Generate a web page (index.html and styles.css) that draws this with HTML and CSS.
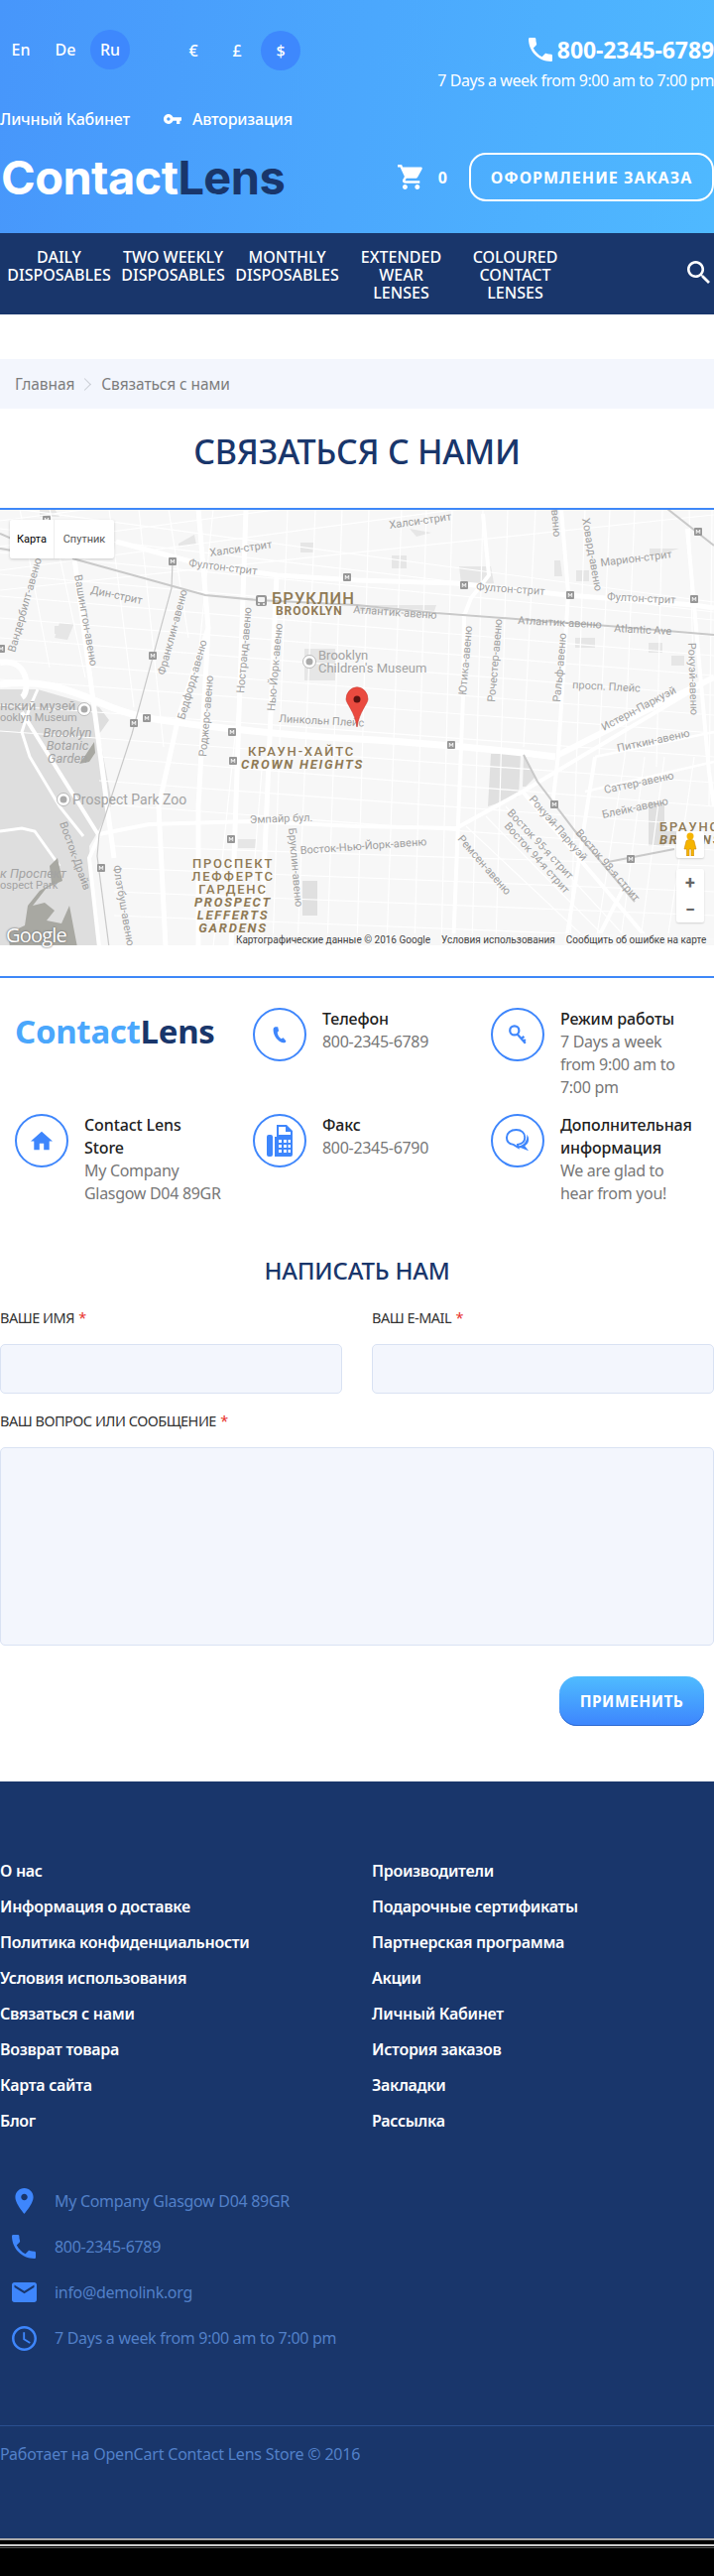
FILE: index.html
```html
<!DOCTYPE html>
<html lang="ru">
<head>
<meta charset="utf-8">
<title>Связаться с нами</title>
<link rel="stylesheet" href="styles.css">
</head>
<body>
<svg class="defs" width="0" height="0" aria-hidden="true">
  <defs>
    <symbol id="i-call" viewBox="3 3 18 18"><path d="M6.62 10.79c1.44 2.83 3.76 5.14 6.59 6.59l2.2-2.2c.27-.27.67-.36 1.02-.24 1.12.37 2.33.57 3.57.57.55 0 1 .45 1 1V20c0 .55-.45 1-1 1-9.39 0-17-7.61-17-17 0-.55.45-1 1-1h3.5c.55 0 1 .45 1 1 0 1.25.2 2.45.57 3.57.11.35.03.74-.25 1.02l-2.2 2.2z"/></symbol>
    <symbol id="i-cart" viewBox="1 2 21 20"><path d="M7 18c-1.1 0-1.99.9-1.99 2S5.9 22 7 22s2-.9 2-2-.9-2-2-2zM1 2v2h2l3.6 7.59-1.35 2.45c-.16.28-.25.61-.25.96 0 1.1.9 2 2 2h12v-2H7.42c-.14 0-.25-.11-.25-.25l.03-.12.9-1.63h7.45c.75 0 1.41-.41 1.75-1.03l3.58-6.49c.08-.14.12-.31.12-.48 0-.55-.45-1-1-1H5.21l-.94-2H1zm16 16c-1.1 0-1.99.9-1.99 2s.89 2 1.99 2 2-.9 2-2-.9-2-2-2z"/></symbol>
    <symbol id="i-search" viewBox="3 3 17.5 17.5"><path d="M15.5 14h-.79l-.28-.27C15.41 12.59 16 11.11 16 9.5 16 5.91 13.09 3 9.5 3S3 5.91 3 9.5 5.91 16 9.5 16c1.61 0 3.09-.59 4.23-1.57l.27.28v.79l5 4.99L20.49 19l-4.99-5zm-6 0C7.01 14 5 11.99 5 9.5S7.01 5 9.5 5 14 7.01 14 9.5 11.99 14 9.5 14z"/></symbol>
    <symbol id="i-key" viewBox="1 6 22 12"><path d="M12.65 10C11.83 7.67 9.61 6 7 6c-3.31 0-6 2.69-6 6s2.69 6 6 6c2.61 0 4.83-1.67 5.65-4H17v4h4v-4h2v-4H12.65zM7 14c-1.1 0-2-.9-2-2s.9-2 2-2 2 .9 2 2-.9 2-2 2z"/></symbol>
    <symbol id="i-place" viewBox="5 2 14 20"><path d="M12 2C8.13 2 5 5.13 5 9c0 5.25 7 13 7 13s7-7.75 7-13c0-3.87-3.13-7-7-7zm0 9.5c-1.38 0-2.5-1.12-2.5-2.5s1.12-2.5 2.5-2.5 2.5 1.12 2.5 2.5-1.12 2.5-2.5 2.5z"/></symbol>
    <symbol id="i-mail" viewBox="2 4 20 16"><path d="M20 4H4c-1.1 0-1.99.9-1.99 2L2 18c0 1.1.9 2 2 2h16c1.1 0 2-.9 2-2V6c0-1.1-.9-2-2-2zm0 4l-8 5-8-5V6l8 5 8-5v2z"/></symbol>
    <symbol id="i-clock" viewBox="2 2 20 20"><path d="M11.99 2C6.47 2 2 6.48 2 12s4.47 10 9.99 10C17.52 22 22 17.52 22 12S17.52 2 11.99 2zM12 20c-4.42 0-8-3.58-8-8s3.58-8 8-8 8 3.58 8 8-3.58 8-8 8zm.5-13H11v6l5.25 3.15.75-1.23-4.5-2.67z"/></symbol>
    <symbol id="m" viewBox="0 0 8 8"><rect width="8" height="8" rx="1" fill="#979797"/><path d="M1.8 6V2h1L4 4l1.2-2h1v4h-.9V3.6L4 5.4 2.7 3.600V6z" fill="#f4f4f4"/></symbol>
  </defs>
</svg>

<header class="head">
  <div class="head-top">
    <div class="pickers">
      <div class="picker">
        <a class="pick">En</a><a class="pick">De</a><a class="pick pick-on">Ru</a>
      </div>
      <div class="picker picker-cur">
        <a class="pick">€</a><a class="pick">£</a><a class="pick pick-on">$</a>
      </div>
    </div>
    <div class="contact">
      <div class="contact-phone"><svg class="ic-phone"><use href="#i-call"/></svg>800-2345-6789</div>
      <div class="contact-hours">7 Days a week from 9:00 am to 7:00 pm</div>
    </div>
  </div>
  <div class="account">
    <a>Личный Кабинет</a>
    <a class="login"><svg class="ic-key"><use href="#i-key"/></svg>Авторизация</a>
  </div>
  <div class="brandrow">
    <a class="logo">Contact<b>Lens</b></a>
    <div class="cartbox">
      <svg class="ic-cart"><use href="#i-cart"/></svg>
      <span class="cart-n">0</span>
      <a class="checkout">ОФОРМЛЕНИЕ ЗАКАЗА</a>
    </div>
  </div>
</header>

<nav class="menu">
  <a>Daily Disposables</a>
  <a>Two Weekly Disposables</a>
  <a>Monthly Disposables</a>
  <a>Extended Wear Lenses</a>
  <a>Coloured Contact Lenses</a>
  <svg class="ic-search"><use href="#i-search"/></svg>
</nav>

<main class="main">
<div class="crumbs"><a>Главная</a><span class="crumb-sep"></span><a>Связаться с нами</a></div>

<h1 class="title">СВЯЗАТЬСЯ С НАМИ</h1>

<section class="mapwrap">
  <svg class="map" viewBox="0 1 720 439" width="720" height="439">
    <rect x="0" y="0" width="720" height="442" fill="#f7f7f7"/>
    <!-- park and water -->
    <path fill="#dedede" d="M0 182H38L100 200 110 213 100 227 113 297 100 323 90 340 93 383 100 442H0Z"/>
    <path fill="none" stroke="#fff" stroke-width="3" d="M38 182 30 200 22 225 30 250 60 300 84 330M0 325 22 322 35 325 60 360"/>
    <path fill="#a8a8a2" d="M50 360 58 352 63 375 47 382 33 400 45 397 55 405 47 415 62 418 70 400 78 442H10L8 428 25 420 28 400 40 385 52 378ZM85 250 95 235 96 246 90 255 80 257Z"/>
    <path fill="#e6e6e6" d="M40 0H55L60 8H40ZM180 35 196 26 198 36 180 38ZM303 34H316V44H303ZM395 47H410V60H395ZM463 58H495L498 75H465ZM413 20 435 24 420 28ZM655 40H685L665 46H655ZM581 62H594V73H581ZM559 52H565L567 68H559ZM580 130H600V140H580ZM654 135H668V145H654ZM677 148H690V158H677ZM360 97H440L438 103H360ZM240 333H258V342H240ZM60 115H75L68 132 55 130ZM55 118H65V126H55ZM307 141H338V173H307Z"/>
    <path fill="#e0e0e0" d="M495 247H525L523 290 492 300ZM528 248 540 270 530 280H527ZM654 295H670V340H654ZM665 325H682V338H665ZM305 375H320V410H305Z"/>
    <!-- minor street grid -->
    <g fill="none" stroke="#fff" stroke-width="1.200">
      <path d="M0 12 720 -82M0 38 720 -58M0 62 720 -34M0 82 720 6M0 -2 720 94M0 20 720 104M0 44 720 112M0 66 720 128M0 88 720 148M0 110 720 168M0 130 720 188M0 152 720 208M0 172 720 226M0 198 720 250M0 224 720 276M100 250 720 300M100 274 720 320M110 298 720 344M115 340 720 360M115 362 720 386M115 386 720 410M115 410 720 434"/>
      <path d="M20 0 50 160M50 0 86 170M110 0 135 200M140 0 165 240M170 0 190 130M215 0 198 170 M240 200 215 442M265 250 250 442M290 0 275 442M318 0 300 442M345 0 330 442M372 0 360 442M405 0 390 442M430 0 418 442M456 0 445 442M487 0 476 442M512 0 500 442M540 0 528 240M590 0 575 442M615 0 604 250M640 0 630 250M668 0 662 260M695 0 700 200M718 0 715 300"/>
      <path d="M630 250 600 442M650 250 625 442M670 250 645 442M700 250 672 442M530 290 660 442M510 300 640 442M490 310 620 442M470 320 600 442"/>
    </g>
    <!-- main roads -->
    <g fill="none" stroke="#fff">
      <path stroke-width="7" d="M0 177C40 172 65 180 100 195S150 212 200 218 320 230 360 232 500 242 560 250"/>
      <path stroke-width="6" d="M563 248 650 204 720 170M0 155C30 150 30 185 22 190"/>
      <path stroke-width="5" d="M117 33 207 57 280 67 360 72 460 75 573 87 700 97 720 100"/>
      <path stroke-width="4" d="M100 328 150 318 253 315 360 320 460 322 527 285 720 170"/>
      <path stroke-width="5" d="M75 50 115 352M200 0 210 120 180 210 160 300 167 442M210 120 200 300 200 442M248 0 233 442M279 66 263 442"/>
      <path stroke-width="4" d="M487 5 493 67 475 90 468 108 467 190 457 442M566 0 573 85 563 247 557 300M693 20 715 265 720 300"/>
      <path stroke-width="4" d="M527 285 660 442M600 250 570 442M598 442 630 380M100 330 90 352 100 442M22 205 100 330"/>
      <path stroke-width="2.500" d="M600 250 720 225M590 285 720 255"/>
    </g>
    <!-- rails -->
    <g fill="none" stroke="#c9c9c9">
      <path stroke-width="2" d="M0 25 30 38M0 40 30 45M73 50 207 87 260 92 360 97 440 105 520 111 613 118 720 127"/>
      <path stroke-width="1.200" d="M174 53 173 80 133 227 100 328 98 350 110 442"/>
      <path stroke-width="2" d="M528 248 542 275 580 325 640 396M613 356 680 343M673 0 720 37"/>
    </g>
    <!-- metro marks -->
    <use href="#m" x="43" y="7" width="8" height="8"/>
    <use href="#m" x="170" y="49" width="8" height="8"/>
    <use href="#m" x="346" y="65" width="8" height="8"/>
    <use href="#m" x="-3" y="137" width="8" height="8"/>
    <use href="#m" x="150" y="144" width="8" height="8"/>
    <use href="#m" x="131" y="212" width="8" height="8"/>
    <use href="#m" x="144" y="207" width="8" height="8"/>
    <use href="#m" x="230" y="221" width="8" height="8"/>
    <use href="#m" x="231" y="250" width="8" height="8"/>
    <use href="#m" x="229" y="329" width="8" height="8"/>
    <use href="#m" x="98" y="358" width="8" height="8"/>
    <use href="#m" x="700" y="19" width="8" height="8"/>
    <use href="#m" x="464" y="73" width="8" height="8"/>
    <use href="#m" x="571" y="83" width="8" height="8"/>
    <use href="#m" x="696" y="87" width="8" height="8"/>
    <use href="#m" x="451" y="234" width="8" height="8"/>
    <use href="#m" x="555" y="294" width="8" height="8"/>
    <use href="#m" x="632" y="349" width="8" height="8"/>
    <rect x="258" y="87" width="11" height="11" rx="2" fill="#979797"/>
    <rect x="260" y="89" width="7" height="5" rx="1" fill="#f4f4f4"/>
    <circle cx="261" cy="96" r="1" fill="#f4f4f4"/><circle cx="266" cy="96" r="1" fill="#f4f4f4"/>
    <!-- street labels -->
    <g class="mt">
      <text x="212" y="48" transform="rotate(-8 212 48)">Халси-стрит</text>
      <text x="190" y="58" transform="rotate(7 190 58)">Фултон-стрит</text>
      <text x="91" y="85" transform="rotate(12 91 85)">Дин-стрит</text>
      <text x="15" y="145" transform="rotate(-74 15 145)">Вандербилт-авеню</text>
      <text x="75" y="67" transform="rotate(80 75 67)">Вашингтон-авеню</text>
      <text x="166" y="168" transform="rotate(-75 166 168)">Франклин-авеню</text>
      <text x="186" y="213" transform="rotate(-74 186 213)">Бедфорд-авеню</text>
      <text x="208" y="250" transform="rotate(-85 208 250)">Роджерс-авеню</text>
      <text x="246" y="186" transform="rotate(-85 246 186)">Ностранд-авеню</text>
      <text x="277" y="204" transform="rotate(-85 277 204)">Нью-Йорк-авеню</text>
      <text x="281" y="215" transform="rotate(3 281 215)">Линкольн Плейс</text>
      <text x="60" y="317" transform="rotate(70 60 317)">Восток-Драйв</text>
      <text x="114" y="360" transform="rotate(80 114 360)">Флэтбуш-авеню</text>
      <text x="291" y="322" transform="rotate(85 291 322)">Бруклин-авеню</text>
      <text x="252" y="317" transform="rotate(-2 252 317)">Эмпайр бул.</text>
      <text x="303" y="348" transform="rotate(-4 303 348)">Восток-Нью-Йорк-авеню</text>
      <text x="393" y="20" transform="rotate(-8 393 20)">Халси-стрит</text>
      <text x="587" y="10" transform="rotate(80 587 10)">Ховард-авеню</text>
      <text x="556" y="1" transform="rotate(85 556 1)">веню</text>
      <text x="606" y="58" transform="rotate(-7 606 58)">Марион-стрит</text>
      <text x="480" y="82" transform="rotate(4 480 82)">Фултон-стрит</text>
      <text x="612" y="92" transform="rotate(3 612 92)">Фултон-стрит</text>
      <text x="356" y="105" transform="rotate(4 356 105)">Атлантик-авеню</text>
      <text x="522" y="116" transform="rotate(3 522 116)">Атлантик-авеню</text>
      <text x="619" y="124" transform="rotate(3 619 124)">Atlantic Ave</text>
      <text x="470" y="188" transform="rotate(-85 470 188)">Ютика-авеню</text>
      <text x="499" y="195" transform="rotate(-85 499 195)">Рочестер-авеню</text>
      <text x="565" y="195" transform="rotate(-85 565 195)">Ральф-авеню</text>
      <text x="577" y="181" transform="rotate(3 577 181)">просп. Плейс</text>
      <text x="609" y="224" transform="rotate(-28 609 224)">Истерн-Паркуэй</text>
      <text x="694" y="135" transform="rotate(88 694 135)">Рокуэй-авеню</text>
      <text x="623" y="245" transform="rotate(-12 623 245)">Питкин-авеню</text>
      <text x="610" y="287" transform="rotate(-12 610 287)">Саттер-авеню</text>
      <text x="608" y="312" transform="rotate(-12 608 312)">Блейк-авеню</text>
      <text x="533" y="293" transform="rotate(49 533 293)">Рокуэй-Паркуэй</text>
      <text x="580" y="327" transform="rotate(49 580 327)">Восток 98-я стрит</text>
      <text x="511" y="307" transform="rotate(47 511 307)">Восток 95-я стрит</text>
      <text x="508" y="320" transform="rotate(48 508 320)">Восток 94-я стрит</text>
      <text x="461" y="333" transform="rotate(49 461 333)">Ремсен-авеню</text>
    </g>
    <g class="mp">
      <text x="0" y="203">нский музей</text>
      <text class="mp-s" x="0" y="214">ooklyn Museum</text>
      <text x="321" y="152">Brooklyn</text>
      <text x="321" y="165">Children's Museum</text>
      <text x="73" y="298" class="mp-zoo">Prospect Park Zoo</text>
      <text class="mi" x="68" y="230">Brooklyn</text>
      <text class="mi" x="68" y="243">Botanic</text>
      <text class="mi" x="68" y="256">Garden</text>
      <text class="mi mi-l" x="0" y="372">к Проспект</text>
      <text class="mp-s" x="0" y="383">ospect Park</text>
    </g>
    <circle cx="312" cy="154" r="6.500" fill="#fff" stroke="#aaa" stroke-width=".8"/>
    <circle cx="312" cy="154" r="3.500" fill="#aaa"/>
    <circle cx="85" cy="202" r="6.500" fill="#fff" stroke="#aaa" stroke-width=".8"/>
    <circle cx="85" cy="202" r="3.500" fill="#aaa"/>
    <circle cx="64" cy="293" r="6.500" fill="#fff" stroke="#aaa" stroke-width=".8"/>
    <circle cx="64" cy="293" r="3.500" fill="#aaa"/>
    <!-- district labels -->
    <g class="md">
      <text class="md-big" x="274" y="96">БРУКЛИН</text>
      <text class="md-b" x="278" y="107">BROOKLYN</text>
      <g class="md-c">
        <text x="304" y="249">КРАУН-ХАЙТС</text>
        <text class="md-i" x="305" y="262">CROWN HEIGHTS</text>
        <text x="235" y="362">ПРОСПЕКТ</text>
        <text x="235" y="375">ЛЕФФЕРТС</text>
        <text x="235" y="388">ГАРДЕНС</text>
        <text class="md-i" x="235" y="401">PROSPECT</text>
        <text class="md-i" x="235" y="414">LEFFERTS</text>
        <text class="md-i" x="235" y="427">GARDENS</text>
      </g>
      <text x="665" y="325">БРАУНС</text>
      <text class="md-i" x="665" y="338">BROWNS</text>
    </g>
    <!-- marker -->
    <path d="M360 220C358 205 349 196 349 192A10.800 12 0 1 1 371 192C371 196 362 205 360 220Z" fill="#ea4a3f" stroke="#c93a30" stroke-width=".6"/>
    <circle cx="360" cy="192" r="3.500" fill="#5a1210"/>
  </svg>
  <div class="map-type"><span class="mt-on">Карта</span><span>Спутник</span></div>
  <div class="map-peg">
    <svg viewBox="0 0 14 24" width="14" height="24"><circle cx="7" cy="4" r="3.500" fill="#f5b400"/><path d="M3 9C3 7 11 7 11 9L13 17H10.500V24H8V17H6V24H3.500V17H1Z" fill="#f5b400" stroke="#d08a00" stroke-width=".6"/></svg>
  </div>
  <div class="map-zoom"><span class="zoom-b">+</span><span class="zoom-b">−</span></div>
  <div class="map-google">Google</div>
  <div class="map-attr"><span>Картографические данные © 2016 Google</span><span>Условия использования</span><span>Сообщить об ошибке на карте</span></div>
</section>

<section class="info">
  <div class="info-logo"><span class="logo logo-sm">Contact<b>Lens</b></span></div>
  <div class="info-item">
    <span class="ring"><svg viewBox="0 0 24 24" class="ring-ic"><path class="ic-fill" d="M7 3.500C5.500 4 5 5 5 7c0 6 5 13 11 14 1.800 0 2.800-.5 3-2l-3-3.500-2.500 1C11 15 9.500 11.500 9.500 9.500l1.500-1.500-1-4.500z"/></svg></span>
    <div><div class="it">Телефон</div><div class="ix">800-2345-6789</div></div>
  </div>
  <div class="info-item">
    <span class="ring"><svg viewBox="0 0 24 24" class="ring-ic"><g fill="none" stroke="#3e86fc" stroke-width="2.400"><circle cx="8.500" cy="7.500" r="5"/><path d="M11.500 11.500l9 10M16 16.500l3-2.500M18.500 19.500l2-2"/></g></svg></span>
    <div><div class="it">Режим работы</div><div class="ix">7 Days a week<br>from 9:00 am to<br>7:00 pm</div></div>
  </div>
  <div class="info-item">
    <span class="ring"><svg viewBox="2 3 20 17" class="ring-ic"><path class="ic-fill" d="M10 20v-6h4v6h5v-8h3L12 3 2 12h3v8z"/></svg></span>
    <div><div class="it">Contact Lens<br>Store</div><div class="ix">My Company<br>Glasgow D04 89GR</div></div>
  </div>
  <div class="info-item">
    <span class="ring"><svg viewBox="0 0 26 36" class="ring-fax"><path class="ic-fill" d="M0 14a2 2 0 0 1 2-2h2a2 2 0 0 1 2 2v18a2 2 0 0 1-2 2H2a2 2 0 0 1-2-2zM8 14h2V2h10l6 6v24a2 2 0 0 1-2 2H8zM12 4v8h12V9h-5V4zM12 17v3h3v-3zm5 0v3h3v-3zm4.500 0v3h2.500v-3zM12 22v3h3v-3zm5 0v3h3v-3zm4.500 0v3h2.500v-3zM12 27v3h3v-3zm5 0v3h3v-3zm4.500 0v3h2.500v-3z" fill-rule="evenodd"/></svg></span>
    <div><div class="it">Факс</div><div class="ix">800-2345-6790</div></div>
  </div>
  <div class="info-item">
    <span class="ring"><svg viewBox="0 0 28 28" class="ring-ic ring-chat"><path fill="none" stroke="#3e86fc" stroke-width="2" d="M12 2C6 2 2 5.500 2 10s3 7 7 7.500L14 20.500l-.5-3C19 16.500 21 13.500 21 10 21 5.500 17.500 2 12 2z"/><path class="ic-fill" d="M23 7c3 3 3 9-2 12l4 5-8-3c-2 0-4 0-5-1l3-1c6-1 9-7 8-12z"/></svg></span>
    <div><div class="it">Дополнительная<br>информация</div><div class="ix">We are glad to<br>hear from you!</div></div>
  </div>
</section>

<h2 class="formtitle">НАПИСАТЬ НАМ</h2>

<form class="form">
  <div class="form-two">
    <div class="field">
      <label class="lbl">ВАШЕ ИМЯ <i>*</i></label>
      <input class="inp" type="text">
    </div>
    <div class="field">
      <label class="lbl">ВАШ E-MAIL <i>*</i></label>
      <input class="inp" type="text">
    </div>
  </div>
  <div class="field field-msg">
    <label class="lbl">ВАШ ВОПРОС ИЛИ СООБЩЕНИЕ <i>*</i></label>
    <textarea class="inp inp-area"></textarea>
  </div>
  <div class="form-act"><button class="btn" type="button">ПРИМЕНИТЬ</button></div>
</form>
</main>

<footer class="foot">
  <div class="foot-links">
    <ul>
      <li>О нас</li><li>Информация о доставке</li><li>Политика конфиденциальности</li><li>Условия использования</li><li>Связаться с нами</li><li>Возврат товара</li><li>Карта сайта</li><li>Блог</li>
    </ul>
    <ul>
      <li>Производители</li><li>Подарочные сертификаты</li><li>Партнерская программа</li><li>Акции</li><li>Личный Кабинет</li><li>История заказов</li><li>Закладки</li><li>Рассылка</li>
    </ul>
  </div>
  <div class="foot-contacts">
    <div class="fc"><span class="fc-ic"><svg class="ic-place"><use href="#i-place"/></svg></span>My Company Glasgow D04 89GR</div>
    <div class="fc"><span class="fc-ic"><svg class="ic-fcall"><use href="#i-call"/></svg></span>800-2345-6789</div>
    <div class="fc"><span class="fc-ic"><svg class="ic-mail"><use href="#i-mail"/></svg></span>info@demolink.org</div>
    <div class="fc"><span class="fc-ic"><svg class="ic-clock"><use href="#i-clock"/></svg></span>7 Days a week from 9:00 am to 7:00 pm</div>
  </div>
  <div class="foot-copy">Работает на OpenCart Contact Lens Store © 2016</div>
</footer>
<div class="tail"><div class="tail-a"></div><div class="tail-b"></div><div class="tail-c"></div></div>
</body>
</html>
```

FILE: styles.css
```css
* { box-sizing: border-box; }
html, body { margin: 0; padding: 0; }
body {
  width: 720px;
  height: 2597px;
  overflow: hidden;
  background: #000;
  font-family: "Noto Sans", "Open Sans", sans-serif;
  font-size: 16px;
  color: #777;
}
.defs { position: absolute; }
a { color: inherit; text-decoration: none; }

/* header */
.head {
  height: 235px;
  background: linear-gradient(100deg, #4796fb 0%, #4fb9ff 100%);
  color: #fff;
  padding-top: 30px;
}
.head-top { display: flex; justify-content: space-between; height: 76px; }
.pickers { display: flex; padding-left: 1px; gap: 44px; }
.picker { display: flex; gap: 5px; }
.picker-cur { gap: 4px; margin-top: 1px; }
.pick {
  width: 40px; height: 40px; border-radius: 50%;
  display: flex; align-items: center; justify-content: center;
  font-size: 16px; font-weight: 500;
}
.pick-on { background: #3e88fd; }
.contact { text-align: right; padding-top: 5px; }
.contact-phone {
  display: flex; align-items: center; justify-content: flex-end;
  font-size: 23px; font-weight: 700; line-height: 30px; letter-spacing: -.1px;
}
.ic-phone { width: 24px; height: 24px; fill: #fff; margin-right: 5px; }
.contact-hours { font-size: 16px; line-height: 24px; margin-top: 4px; letter-spacing: -.45px; white-space: nowrap; }

.account { display: flex; align-items: center; height: 26px; font-size: 16px; font-weight: 500; margin-top: 1px; letter-spacing: -.2px; }
.login { display: flex; align-items: center; margin-left: 34px; }
.ic-key { width: 18px; height: 10px; fill: #fff; margin-right: 11px; }

.brandrow { display: flex; justify-content: space-between; align-items: center; margin-top: 21px; height: 49px; }
.logo { font-family: Inter, "Noto Sans", sans-serif; font-size: 47px; font-weight: 700; color: #fff; line-height: 49px; letter-spacing: -.6px; padding-left: 1px; }
.logo b { color: #19366b; font-weight: 700; }
.cartbox { display: flex; align-items: center; }
.ic-cart { width: 26px; height: 25px; fill: #fff; }
.cart-n { font-weight: 700; font-size: 16px; margin: 0 22px 0 15px; }
.checkout {
  width: 247px; height: 49px; border: 2px solid #fff; border-radius: 17px;
  display: flex; align-items: center; justify-content: center;
  font-size: 16px; font-weight: 700; letter-spacing: 1px; white-space: nowrap;
}

/* nav */
.menu {
  height: 82px; background: #19366b; color: #fff;
  display: flex; align-items: flex-start; padding: 15px 0 0 2px;
}
.menu a {
  width: 115px; text-align: center; text-transform: uppercase;
  font-size: 16px; font-weight: 500; line-height: 18px; padding: 0 14px;
}
.menu a:first-child, .menu a:nth-child(2), .menu a:nth-child(3) { padding: 0; }
.ic-search { width: 23px; height: 23px; fill: #fff; margin: 13px 0 0 116px; }

/* crumbs */
.main { background: #fff; padding-top: 45px; }
.crumbs {
  height: 50px; background: #f3f6fd;
  display: flex; align-items: center; padding-left: 15px; font-size: 15.500px; color: #7d7d7d; letter-spacing: -.1px;
}
.crumb-sep {
  width: 9px; height: 9px; margin: 0 12px 0 6px;
  border-top: 1px solid #c9cdd4; border-right: 1px solid #c9cdd4; transform: rotate(45deg);
}
.title {
  margin: 0; height: 100px;
  font-size: 34px; font-weight: 500; color: #19366b; text-align: center; line-height: 86px; letter-spacing: -.3px;
}

/* map */
.mapwrap {
  position: relative; height: 472px;
  border-top: 2px solid #3f88f8;
}
.map { display: block; }
.map text { font-family: Roboto, sans-serif; }
.mt text { font-size: 11px; fill: #a0a0a0; }
.mp text { font-size: 13px; fill: #a3a3a3; }
.mp .mp-s { font-size: 11px; }
.mp .mp-zoo { font-size: 14px; }
.mp .mi { font-style: italic; text-anchor: middle; }
.mp .mi-l { text-anchor: start; }
.md text { font-size: 13px; fill: #8f7a55; font-weight: 500; letter-spacing: 1.800px; }
.md .md-big { font-size: 16.500px; letter-spacing: 1px; }
.md .md-b { font-size: 12px; font-weight: 700; letter-spacing: .9px; }
.md-c text { text-anchor: middle; }
.md .md-i { font-style: italic; font-weight: 700; }
.map-type {
  position: absolute; left: 10px; top: 10px; display: flex; height: 39px;
  background: #fff; border-radius: 2px; box-shadow: 0 1px 3px rgba(0,0,0,.18);
  font-family: Roboto, sans-serif; font-size: 11px; color: #565656;
}
.map-type span { display: flex; align-items: center; justify-content: center; width: 60px; }
.map-type .mt-on { width: 45px; color: #000; border-right: 1px solid #eee; }
.map-peg {
  position: absolute; left: 682px; top: 324px; width: 28px; height: 27px; background: #fff;
  display: flex; justify-content: center; border-radius: 2px; padding-top: 1px; box-shadow: 0 1px 2px rgba(0,0,0,.15);
}
.map-zoom {
  position: absolute; left: 682px; top: 362px; width: 28px; height: 54px; background: #fff; border-radius: 2px;
  box-shadow: 0 1px 2px rgba(0,0,0,.15); display: flex; flex-direction: column;
}
.zoom-b { height: 27px; display: flex; align-items: center; justify-content: center; font: 700 18px Roboto, sans-serif; color: #666; }
.map-google {
  position: absolute; left: 6px; top: 415px; font: 500 20px "Open Sans", sans-serif; color: #fff; letter-spacing: -.8px;
  text-shadow: 0 0 2px #777, 0 0 2px #777;
}
.map-attr {
  position: absolute; left: 238px; right: 0; top: 427px; height: 12px; background: rgba(246,246,246,.7);
  display: flex; gap: 11px; align-items: center;
  font: 400 10px Roboto, sans-serif; color: #444; white-space: nowrap;
}

/* info */
.info {
  height: 282px; border-top: 2px solid #3f88f8; padding: 30px 0 0;
  display: grid; grid-template-columns: repeat(3, 240px); grid-template-rows: 107px auto;
}
.info-logo { padding: 10px 0 0 15px; }
.logo-sm { font-size: 33px; line-height: 27px; color: #4aa7fc; padding: 0; letter-spacing: -.3px; font-family: "Noto Sans", sans-serif; }
.logo-sm b { font-weight: 700; }
.info-item { display: flex; padding-left: 15px; gap: 16px; }
.ring { flex: none; width: 54px; height: 54px; border: 2px solid #3e86fc; border-radius: 50%; display: flex; align-items: center; justify-content: center; }
.ring-ic { width: 22px; height: 22px; }
.ring-chat { width: 27px; height: 27px; }
.ring-fax { width: 26px; height: 36px; }
.ic-fill { fill: #3e86fc; }
.it { font-size: 16px; font-weight: 500; color: #222; line-height: 23px; letter-spacing: -.1px; white-space: nowrap; }
.ix { font-size: 16px; line-height: 23px; color: #777; letter-spacing: -.3px; white-space: nowrap; }

/* form */
.formtitle {
  margin: 0; height: 36px; color: #19366b;
  font-size: 24px; font-weight: 500; line-height: 30px; text-align: center; letter-spacing: -.2px;
}
.form { height: 494px; }
.form-two { display: grid; grid-template-columns: 345px 345px; gap: 30px; }
.lbl { display: block; font-size: 14.500px; line-height: 20px; color: #333; padding-top: 16px; height: 53px; letter-spacing: -.5px; }
.lbl i { font-style: normal; color: #e8302a; margin-left: 1px; }
.inp {
  display: block; width: 100%; height: 50px; margin: 0; background: #f3f6fd;
  border: 1px solid #d9e2f3; border-radius: 5px;
}
.inp-area { height: 200px; resize: none; }
.field-msg { margin-top: 1px; }
.form-act { display: flex; justify-content: flex-end; padding: 31px 10px 0 0; }
.btn {
  width: 146px; height: 50px; border: 0; border-radius: 18px; color: #fff;
  background: linear-gradient(180deg, #4fbcff 0%, #3d85fd 100%); box-shadow: inset 0 -1px 0 #2f6bd0;
  font: 700 15.500px "Noto Sans", sans-serif; letter-spacing: .5px;
}

/* footer */
.foot { background: #19366b; height: 763px; padding-top: 72px; color: #5280c8; }
.foot-links { display: grid; grid-template-columns: 375px 345px; height: 288px; }
.foot-links ul { margin: 0; padding: 0; list-style: none; }
.foot-links li { height: 36px; line-height: 36px; font-size: 16px; font-weight: 600; color: #fff; letter-spacing: -.3px; white-space: nowrap; }
.foot-contacts { margin-top: 40px; }
.fc { display: flex; align-items: center; height: 46px; font-size: 16px; letter-spacing: -.3px; }
.fc-ic { width: 55px; padding-left: 12px; display: flex; }
.fc-ic svg { fill: #3e86fc; }
.ic-place { width: 19px; height: 26px; margin-left: 3px; }
.ic-fcall { width: 24px; height: 24px; }
.ic-mail { width: 25px; height: 20px; }
.ic-clock { width: 25px; height: 25px; }
.foot-copy {
  margin-top: 65px; border-top: 1px solid #2a4f90; height: 57px; line-height: 56px;
  font-size: 16px; letter-spacing: -.2px;
}
.tail { height: 38px; background: #000; }
.tail-a { height: 2px; background: #aaa; }
.tail-b { height: 2px; margin-top: 4px; background: #ccc; }
.tail-c { height: 1px; margin-top: 1px; background: #555; }
```
